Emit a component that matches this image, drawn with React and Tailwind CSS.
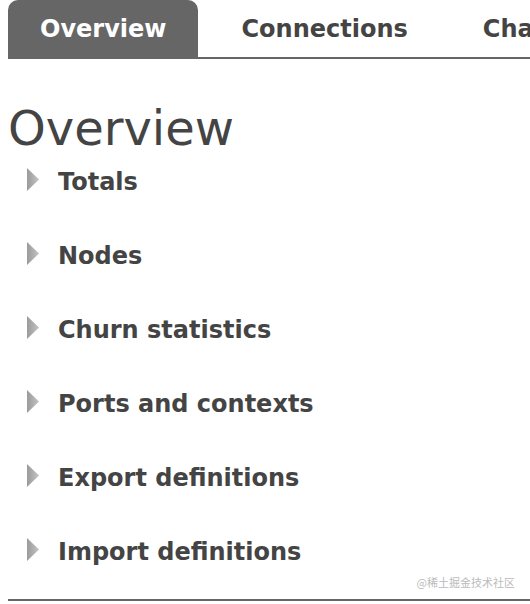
import React from 'react';

const sections = [
  'Totals',
  'Nodes',
  'Churn statistics',
  'Ports and contexts',
  'Export definitions',
  'Import definitions',
];

const tabs = ['Overview', 'Connections', 'Channels'];

function Arrow() {
  return (
    <svg width="12" height="23" viewBox="0 0 12 23" className="shrink-0 -mt-[6px]">
      <defs>
        <linearGradient id="arrowShade" x1="0" y1="0" x2="1" y2="0">
          <stop offset="0" stopColor="#9a9a9a" />
          <stop offset="1" stopColor="#c4c4c4" />
        </linearGradient>
      </defs>
      <polygon points="0,0 12,11.5 0,23" fill="url(#arrowShade)" />
    </svg>
  );
}

export default function App() {
  return (
    <div className="relative w-[530px] h-[604px] overflow-hidden bg-white font-['DejaVu_Sans',sans-serif] text-[#444]">
      {/* Tab bar */}
      <div className="ml-2 h-[59px] flex gap-[11px] border-b-2 border-[#666] whitespace-nowrap overflow-hidden">
        {tabs.map((t, i) => (
          <div
            key={t}
            className={
              i === 0
                ? 'h-[57px] px-8 flex items-center rounded-t-[10px] bg-[#666] text-white text-[24px] font-bold'
                : 'h-[57px] px-8 flex items-center text-[24px] font-bold text-[#444]'
            }
          >
            {t}
          </div>
        ))}
      </div>

      <h1 className="ml-2 mt-[45px] text-[48px] leading-[48px] font-normal text-[#444]">Overview</h1>

      <div className="-mt-[7px] ml-2">
        {sections.map((s) => (
          <div key={s} className="h-[74px] flex items-center">
            <div className="ml-[19px] flex items-center gap-5">
              <Arrow />
              <span className="-ml-px text-[24px] font-bold text-[#444]">{s}</span>
            </div>
          </div>
        ))}
      </div>

      <div className="ml-2 mt-[10px] border-t-2 border-[#666]" />

      <div className="absolute right-[15px] top-[574px] text-[11px] text-[#bbb] font-['Noto_Sans_CJK_SC',sans-serif]">
        @稀土掘金技术社区
      </div>
    </div>
  );
}
